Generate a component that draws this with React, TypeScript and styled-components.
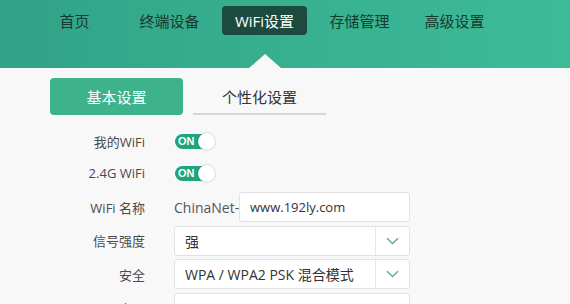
import React from 'react';
import styled, { createGlobalStyle } from 'styled-components';

const GlobalStyle = createGlobalStyle`
  html, body {
    margin: 0;
    padding: 0;
    background: #f8f8f8;
    font-family: "Open Sans", "Noto Sans CJK SC", sans-serif;
    overflow: hidden;
  }
`;

const Page = styled.div`
  width: 570px;
  height: 304px;
  overflow: hidden;
  background: #f8f8f8;
`;

const Header = styled.div`
  height: 68px;
  background: linear-gradient(90deg, #31a387 0%, #37b08f 50%, #3dbb98 100%);
  display: flex;
  align-items: flex-start;
  gap: 10px;
  padding: 6px 0 0 32px;
  box-sizing: border-box;
`;

const NavItem = styled.div<{ $active?: boolean }>`
  position: relative;
  width: 85px;
  height: 29px;
  display: flex;
  align-items: center;
  justify-content: center;
  font-size: 15px;
  border-radius: 4px;
  color: ${p => (p.$active ? '#ffffff' : '#173a30')};
  background: ${p => (p.$active ? '#1c4a3f' : 'transparent')};

  ${p => p.$active && `
    &::after {
      content: '';
      position: absolute;
      left: 50%;
      margin-left: -16px;
      top: 48px;
      border-left: 16px solid transparent;
      border-right: 16px solid transparent;
      border-bottom: 14px solid #f8f8f8;
    }
  `}
`;

const Content = styled.div`
  padding: 10px 0 0 50px;
`;

const Tabs = styled.div`
  display: flex;
  gap: 10px;
`;

const Tab = styled.div<{ $active?: boolean }>`
  width: 133px;
  height: 37px;
  box-sizing: border-box;
  display: flex;
  align-items: center;
  justify-content: center;
  font-size: 15px;
  border-radius: ${p => (p.$active ? '4px' : '0')};
  color: ${p => (p.$active ? '#ffffff' : '#333333')};
  background: ${p => (p.$active ? '#3db28b' : 'transparent')};
  border-bottom: ${p => (p.$active ? 'none' : '2px solid #d6d6d6')};
  padding-top: ${p => (p.$active ? '0' : '2px')};
`;

const Form = styled.div`
  display: flex;
  flex-direction: column;
  margin-top: 10px;
`;

const Row = styled.div<{ $h: number; $gap?: number }>`
  display: flex;
  align-items: center;
  height: ${p => p.$h}px;
  margin-bottom: ${p => p.$gap ?? 0}px;
  gap: 29px;
`;

const Label = styled.div`
  width: 95px;
  text-align: right;
  font-size: 13px;
  color: #4a4a4a;
`;

const Toggle = styled.div`
  position: relative;
  width: 39px;
  height: 15px;
  border-radius: 8px;
  background: #1fa47c;
  display: flex;
  align-items: center;
  padding-left: 3px;
  box-sizing: border-box;
  color: #fff;
  font-size: 11px;
  font-weight: 700;
  font-family: "Liberation Sans", sans-serif;
  margin-left: 1px;
`;

const Knob = styled.span`
  position: absolute;
  right: -1px;
  top: -1px;
  width: 17px;
  height: 17px;
  border-radius: 50%;
  background: #fff;
  box-shadow: 0 0 2px rgba(0, 0, 0, 0.3);
`;

const Prefix = styled.span`
  font-size: 14px;
  color: #555;
  width: 65px;
  white-space: nowrap;
`;

const Field = styled.div`
  display: flex;
  align-items: center;
`;

const Box = styled.div<{ $w: number }>`
  width: ${p => p.$w}px;
  height: 30px;
  box-sizing: border-box;
  background: #fff;
  border: 1px solid #e2e2e2;
  border-radius: 3px;
  display: flex;
  align-items: center;
  font-size: 14px;
  color: #333;
`;

const BoxText = styled.span<{ $small?: boolean }>`
  flex: 1;
  padding-left: 10px;
  white-space: nowrap;
  overflow: hidden;
  font-size: ${p => (p.$small ? '13px' : '14px')};
`;

const Arrow = styled.span`
  width: 33px;
  height: 100%;
  border-left: 1px solid #e6e6e6;
  display: flex;
  align-items: center;
  justify-content: center;
`;

const Dot = styled.span`
  width: 13px;
  height: 13px;
  border-radius: 50%;
  background: #3a9e80;
  margin-right: 8px;
  margin-top: 18px;
`;

const Chevron = () => (
  <svg width="13" height="8" viewBox="0 0 13 8">
    <path d="M1 1.2 L6.5 6.5 L12 1.2" fill="none" stroke="#5fa590" strokeWidth="1.3" />
  </svg>
);

export default function App() {
  const nav = ['首页', '终端设备', 'WiFi设置', '存储管理', '高级设置'];
  return (
    <Page>
      <GlobalStyle />
      <Header>
        {nav.map(n => (
          <NavItem key={n} $active={n === 'WiFi设置'}>{n}</NavItem>
        ))}
      </Header>
      <Content>
        <Tabs>
          <Tab $active>基本设置</Tab>
          <Tab>个性化设置</Tab>
        </Tabs>
        <Form>
          <Row $h={32}>
            <Label>我的WiFi</Label>
            <Toggle>ON<Knob /></Toggle>
          </Row>
          <Row $h={32} $gap={3}>
            <Label>2.4G WiFi</Label>
            <Toggle>ON<Knob /></Toggle>
          </Row>
          <Row $h={30} $gap={4}>
            <Label>WiFi 名称</Label>
            <Field>
              <Prefix>ChinaNet-</Prefix>
              <Box $w={171}><BoxText $small>www.192ly.com</BoxText></Box>
            </Field>
          </Row>
          <Row $h={29} $gap={4}>
            <Label>信号强度</Label>
            <Box $w={236}><BoxText>强</BoxText><Arrow><Chevron /></Arrow></Box>
          </Row>
          <Row $h={30} $gap={4}>
            <Label>安全</Label>
            <Box $w={236}><BoxText>WPA / WPA2 PSK 混合模式</BoxText><Arrow><Chevron /></Arrow></Box>
          </Row>
          <Row $h={30}>
            <Label>WiFi 密码</Label>
            <Box $w={236}><BoxText>12345678</BoxText><Dot /></Box>
          </Row>
        </Form>
      </Content>
    </Page>
  );
}
